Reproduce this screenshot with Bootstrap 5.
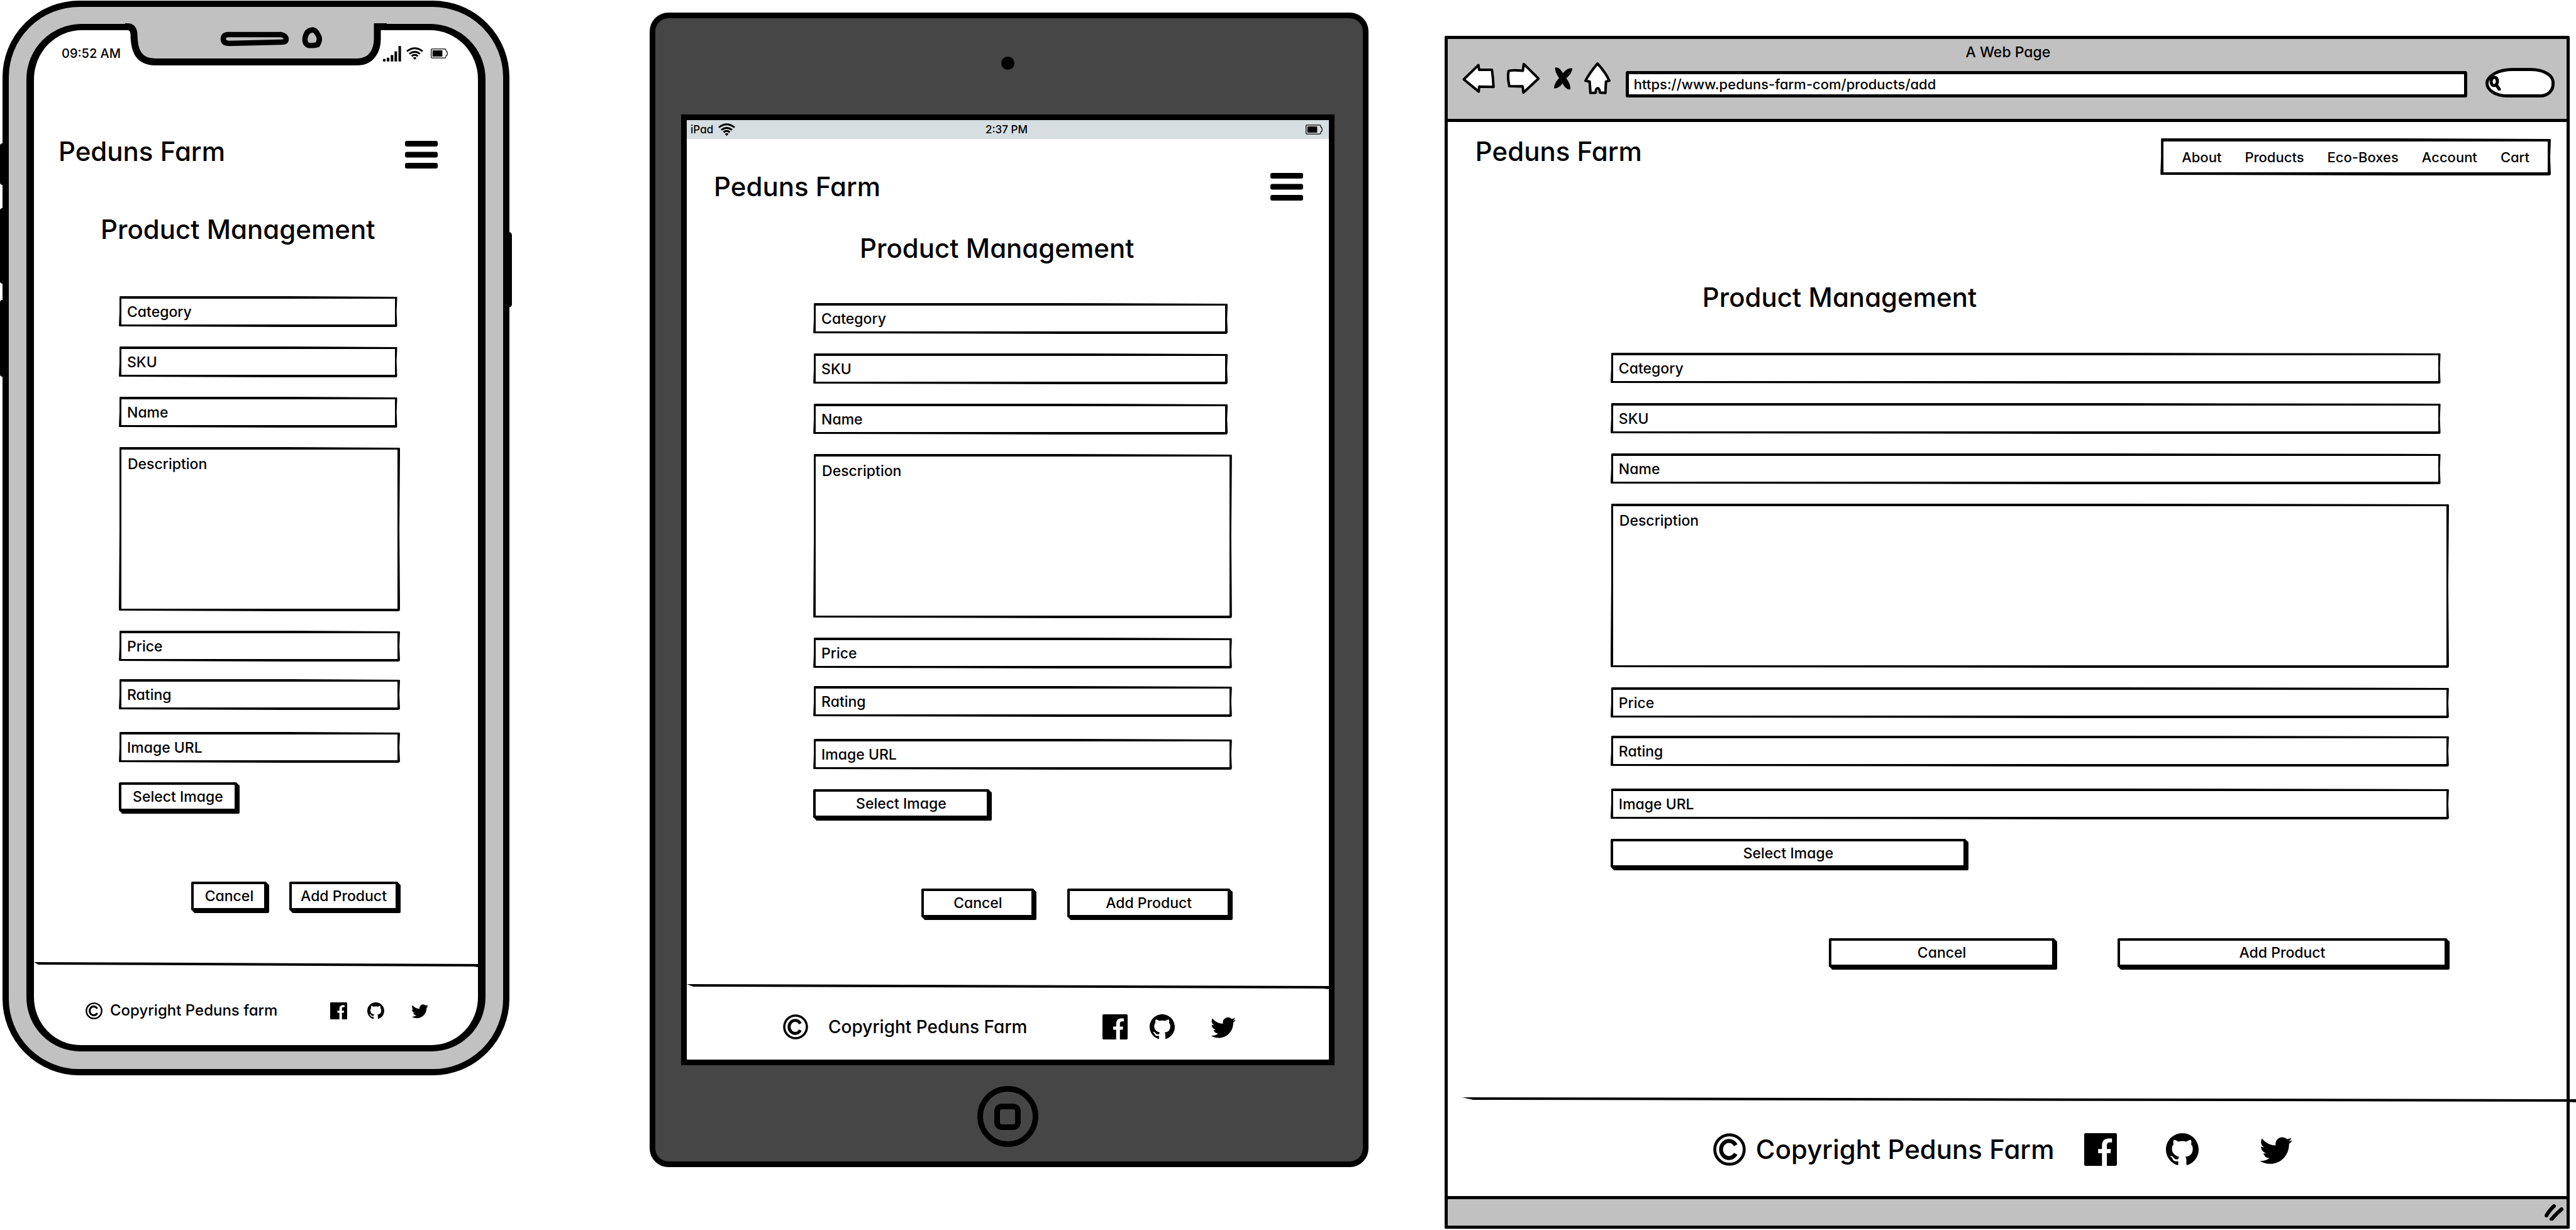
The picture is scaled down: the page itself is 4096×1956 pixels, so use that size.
<!DOCTYPE html>
<html lang="en">
<head>
<meta charset="utf-8">
<meta name="viewport" content="width=device-width, initial-scale=1">
<title>Peduns Farm - Product Management</title>
<link href="https://cdn.jsdelivr.net/npm/bootstrap@5.3.0/dist/css/bootstrap.min.css" rel="stylesheet">
<style>
  body, input, textarea, button { font-family: Inter, "Noto Sans", sans-serif; font-feature-settings: "cv11"; font-weight: 500; }
  body { background: #fff; color: #000; font-size: 23px; line-height: 28px; overflow-x: hidden; }
  svg { display: block; flex: none; fill: currentColor; }
  a { color: #000; text-decoration: none; }

  /* device columns */
  .dev-phone { width: 19.68%; margin: 1px 0 0 4px; }
  .dev-tablet { width: 27.9%; margin: 20px 0 0 223px; }
  .dev-browser { width: 43.68%; margin: 57px 0 0 121px; }

  /* phone */
  .dev-phone { border: 10px solid #000; border-radius: 122px; background: #c1c1c1; padding: 27px 28px 28px; }
  .phone-screen { border: 12px solid #000; border-width: 10px 12px; border-radius: 88px 88px 86px 86px; background: #fff; }
  .phone-notch { top: 0; left: 50%; transform: translateX(-50%); }
  .side-key { width: 9px; background: #000; }
  .key-l { left: -14px; border-radius: 4px 0 0 4px; }
  .key-r { right: -14px; border-radius: 0 5px 5px 0; }
  .key-1 { top: 217px; height: 66px; }
  .key-2 { top: 320px; height: 120px; }
  .key-3 { top: 466px; height: 122px; }
  .key-4 { top: 358px; height: 120px; }
  .phone-status { padding: 22px 48px 0 44px; line-height: 30px; font-size: 20px; }

  /* tablet */
  .dev-tablet { border: 9px solid #000; border-radius: 30px; background: #464646; padding: 0 45px 0 41px; }
  .lens-bezel { height: 153px; padding-bottom: 10px; }
  .lens { width: 21px; height: 21px; border-radius: 50%; background: #000; }
  .tablet-screen { border: 9px solid #000; background: #fff; }
  .tablet-status { height: 30px; padding: 0 10px 0 6px; background: #d7dee1; font-size: 17px; }
  .tablet-status > * { flex: 1 1 0; }
  .home-bezel { padding: 33px 0 23px; }
  .home-key { width: 97px; height: 97px; border: 9px solid #000; border-radius: 50%; background: transparent; }
  .home-mark { width: 42px; height: 42px; border: 9px solid #000; border-radius: 12px; }

  /* browser */
  .dev-browser { border: 5px solid #000; border-radius: 2px; background: #fff; }
  .chrome { background: #c1c1c1; border-bottom: 5px solid #000; padding: 7px 19px 34px 22px; }
  .chrome-title { line-height: 28px; }
  .tool-btn { padding: 0; border: 0; background: none; color: #000; }
  .url-box { height: 42px; border: 5px solid #000; border-radius: 3px; padding: 0 8px; background: #fff; color: #000; font-size: 22px; margin-left: 22px; margin-right: 29px; min-width: 0; }
  .find-box { width: 110px; height: 47px; border: 5px solid #000; border-radius: 46px 40px 24px 36px / 26px 24px 22px 24px; background: #fff; }
  .find-box input { width: 60px; border: 0; outline: 0; background: transparent; padding: 0; }
  .site-nav { border: 5px solid #000; border-radius: 3px; padding: 0 29px; gap: 37px; height: 59px; margin-top: 6px; font-size: 22px; }
  .grip-bar { background: #c1c1c1; border-top: 5px solid #000; height: 47px; padding-right: 5px; }

  /* page parts shared by the three screens */
  .big { font-size: 42px; line-height: 54px; font-weight: 500; margin: 0; }
  .site-head { padding: var(--head-t) var(--head-r) 0 var(--head-l); }
  .page-title { padding: var(--title-t) 0 0 var(--title-l); }
  .product-form { padding: var(--form-t) var(--form-r) 0 var(--form-l); }
  .sk-field { display: block; width: 100%; height: 49px; border: 4px solid #000; border-radius: 3px; padding: 0 9px; background: #fff; color: #000; margin-bottom: 31px; resize: none; line-height: 28px; }
  .sk-field, .site-nav { clip-path: polygon(1px 0, 60% 0, 100% 1px, calc(100% - 1px) 50%, 100% 100%, 60% 100%, 0 calc(100% - 1px), 1px 50%); }
  .sk-field::placeholder { color: #000; opacity: 1; }
  .sk-short { width: 99%; }
  .sk-area { height: 261px; padding: 9px 10px; }
  .sk-price { margin-bottom: 28px; }
  .sk-rating { margin-bottom: 35px; }
  .sk-btn { height: 46px; border: 4px solid #000; border-radius: 2px; background: #fff; color: #000; box-shadow: 2px 2px 0 #000, 4px 4px 0 #000; padding: 0; line-height: 28px; white-space: nowrap; }
  .w-select { width: 42%; }
  .w-cancel { width: 27%; }
  .w-add { width: 39%; }
  .form-actions { margin-top: 112px; gap: 8%; padding-right: 3px; }
  .foot-rule { height: 8px; background: #000; border: 0; opacity: 1; margin: var(--rule-t) 0 0; clip-path: polygon(0 0, 100% 3px, 100% 8px, 99% 7px, 1% 4px); }
  .site-foot { padding: var(--foot-t) var(--foot-r) var(--foot-b) var(--foot-l); }
  .site-foot .glyph { width: var(--icon); height: var(--icon); }
  .copy-text { font-size: var(--foot-size); line-height: 32px; margin-left: var(--copy-gap); white-space: nowrap; }
  .icon-a { margin-right: var(--gap-a); }
  .icon-b { margin-right: var(--gap-b); }

  .phone-screen { --head-t: 114px; --head-r: 64px; --head-l: 39px; --title-t: 70px; --title-l: 106px; --form-t: 79px; --form-r: 124px; --form-l: 135px; --rule-t: 82px; --foot-t: 53px; --foot-r: 79px; --foot-b: 39px; --foot-l: 82px; --icon: 27px; --foot-size: 24px; --copy-gap: 12px; --gap-a: 32px; --gap-b: 43px; }
  .tablet-screen { --head-t: 49px; --head-r: 41px; --head-l: 43px; --title-t: 44px; --title-l: 275px; --form-t: 60px; --form-r: 154px; --form-l: 201px; --rule-t: 106px; --foot-t: 40px; --foot-r: 148px; --foot-b: 32px; --foot-l: 153px; --icon: 40px; --foot-size: 28px; --copy-gap: 32px; --gap-a: 35px; --gap-b: 57px; }
  .dev-browser { --head-t: 20px; --head-r: 25px; --head-l: 44px; --title-t: 167px; --title-l: 405px; --form-t: 61px; --form-r: 187px; --form-l: 259px; --rule-t: 207px; --foot-t: 49px; --foot-r: 436px; --foot-b: 48px; --foot-l: 422px; --icon: 52px; --foot-size: 42px; --copy-gap: 16px; --gap-a: 78px; --gap-b: 97px; }
  .dev-browser .foot-rule { margin-left: 23px; margin-right: -15px; position: relative; }
  .dev-browser .w-select { width: 42.4%; }
  .dev-browser .w-add { width: 39.4%; }
  .dev-browser .form-actions { gap: 7.5%; }
</style>
</head>
<body>
<svg class="d-none" aria-hidden="true">
  <symbol id="i-menu" viewBox="0 0 52 44"><rect width="52" height="9" rx="3"/><rect y="17.500" width="52" height="9" rx="3"/><rect y="35" width="52" height="9" rx="3"/></symbol>
  <symbol id="i-copy" viewBox="0 0 100 100"><circle cx="50" cy="50" r="45" fill="none" stroke="currentColor" stroke-width="9"/><path d="M69 37A24 26 0 1 0 69 63" fill="none" stroke="currentColor" stroke-width="12" stroke-linecap="butt"/></symbol>
  <symbol id="i-fb" viewBox="0 0 16 16"><path fill-rule="evenodd" d="M.7 0H15.300A.7.7 0 0 1 16 .7V15.300A.7.7 0 0 1 15.300 16H11.100V9.800H12.900L13.100 7.800H11.100V6C11.100 5 11.400 4.500 12.500 4.500H13.600V2.600H12C9.800 2.600 8.700 3.900 8.700 6V7.800H6.800V9.800H8.700V16H.7A.7.7 0 0 1 0 15.300V.7A.7.7 0 0 1 .7 0Z"/></symbol>
  <symbol id="i-gh" viewBox="0 0 16 16"><path d="M8 0C3.580 0 0 3.580 0 8c0 3.540 2.290 6.530 5.470 7.590.4.070.55-.17.55-.38 0-.19-.01-.82-.01-1.490-2.010.37-2.530-.49-2.690-.94-.09-.23-.48-.94-.82-1.130-.28-.15-.68-.52-.01-.53.63-.01 1.080.58 1.230.82.72 1.210 1.870.87 2.330.66.070-.52.280-.87.510-1.070-.6-.07-3.640-.89-3.640-3.950 0-.87.310-1.590.820-2.150-.08-.2-.36-1.020.080-2.120 0 0 .67-.21 2.200.82.64-.18 1.320-.27 2-.27.68 0 1.360.09 2 .27 1.530-1.040 2.200-.82 2.200-.82.44 1.100.16 1.920.08 2.120.51.56.82 1.270.82 2.150 0 3.070-1.870 3.750-3.650 3.950.29.25.54.73.54 1.480 0 1.070-.01 1.930-.01 2.200 0 .21.15.46.55.38A8.012 8.012 0 0 0 16 8c0-4.420-3.580-8-8-8z"/></symbol>
  <symbol id="i-tw" viewBox="0 0 16 16"><path d="M5.026 15c6.038 0 9.341-5.003 9.341-9.334 0-.14 0-.282-.006-.422A6.685 6.685 0 0 0 16 3.542a6.658 6.658 0 0 1-1.889.518 3.301 3.301 0 0 0 1.447-1.817 6.533 6.533 0 0 1-2.087.793A3.286 3.286 0 0 0 7.875 6.030a9.325 9.325 0 0 1-6.767-3.429 3.289 3.289 0 0 0 1.018 4.382A3.323 3.323 0 0 1 .64 6.575v.045a3.288 3.288 0 0 0 2.632 3.218 3.203 3.203 0 0 1-.865.115 3.230 3.230 0 0 1-.614-.057 3.283 3.283 0 0 0 3.067 2.277A6.588 6.588 0 0 1 .78 13.580a6.320 6.320 0 0 1-.78-.045A9.344 9.344 0 0 0 5.026 15z"/></symbol>
  <symbol id="i-signal" viewBox="0 0 92 78"><path d="M0 65h13v13H0zM19 59h13v19H19zM39 45h13v33H39zM58 27h13v51H58zM78 0h13v78H78z"/></symbol>
  <symbol id="i-wifi" viewBox="0 0 82 60"><g fill="none" stroke="currentColor" stroke-width="9"><path d="M3 20Q41-10 79 20"/><path d="M15 32Q41 12 67 32"/><path d="M26 43Q41 31 56 43"/></g><path d="M32 51Q41 44 50 51L41 60Z"/></symbol>
  <symbol id="i-batt" viewBox="0 0 88 50"><path d="M6 2H74Q78 2 79 13L84 16Q87 25 84 34L79 37Q78 48 74 48H6Q2 48 2 44V6Q2 2 6 2Z" fill="none" stroke="currentColor" stroke-width="4"/><rect x="9" y="9" width="51" height="32"/></symbol>
</svg>

<main class="d-flex align-items-start">

  <!-- phone -->
  <section class="dev-phone flex-shrink-0 position-relative" aria-label="Phone">
    <span class="side-key key-l key-1 position-absolute"></span>
    <span class="side-key key-l key-2 position-absolute"></span>
    <span class="side-key key-l key-3 position-absolute"></span>
    <span class="side-key key-r key-4 position-absolute"></span>
    <div class="phone-screen">
      <div class="phone-status d-flex justify-content-between align-items-center">
        <span>09:52 AM</span>
        <span class="d-flex align-items-center">
          <svg class="me-2" width="29" height="25"><use href="#i-signal"/></svg>
          <svg class="me-2" width="27" height="20"><use href="#i-wifi"/></svg>
          <svg class="ms-1" width="27" height="16"><use href="#i-batt"/></svg>
        </span>
      </div>
      <header class="site-head d-flex justify-content-between align-items-end">
        <a class="big" href="#">Peduns Farm</a>
        <button class="tool-btn" type="button" aria-label="Menu"><svg width="52" height="44"><use href="#i-menu"/></svg></button>
      </header>
      <h2 class="big page-title">Product Management</h2>
      <form class="product-form">
        <input class="sk-field sk-short" type="text" placeholder="Category" aria-label="Category">
        <input class="sk-field sk-short" type="text" placeholder="SKU" aria-label="SKU">
        <input class="sk-field sk-short" type="text" placeholder="Name" aria-label="Name">
        <textarea class="sk-field sk-area" placeholder="Description" aria-label="Description"></textarea>
        <input class="sk-field sk-price" type="text" placeholder="Price" aria-label="Price">
        <input class="sk-field sk-rating" type="text" placeholder="Rating" aria-label="Rating">
        <input class="sk-field" type="text" placeholder="Image URL" aria-label="Image URL">
        <button class="sk-btn w-select d-block" type="button">Select Image</button>
        <div class="form-actions d-flex justify-content-end">
          <button class="sk-btn w-cancel" type="button">Cancel</button>
          <button class="sk-btn w-add" type="submit">Add Product</button>
        </div>
      </form>
      <hr class="foot-rule">
      <footer class="site-foot d-flex align-items-center">
        <svg class="glyph"><use href="#i-copy"/></svg>
        <span class="copy-text">Copyright Peduns farm</span>
        <a class="icon-a ms-auto" href="#" aria-label="Facebook"><svg class="glyph"><use href="#i-fb"/></svg></a>
        <a class="icon-b" href="#" aria-label="GitHub"><svg class="glyph"><use href="#i-gh"/></svg></a>
        <a href="#" aria-label="Twitter"><svg class="glyph"><use href="#i-tw"/></svg></a>
      </footer>
    </div>
    <svg class="phone-notch position-absolute" width="416" height="96" viewBox="200 11 416 96" aria-hidden="true">
      <path fill="#c1c1c1" d="M210 35H604V62C601 80 594 98 572 98H246C222 98 214 80 214 54Z"/>
      <path fill="none" stroke="#000" stroke-width="11" d="M200 42.500H203Q213 42 214 54C214 82 222 98 248 98.500H570C592 98 601 80 601 62V42.500H616"/>
      <path fill="none" stroke="#000" stroke-width="8.500" d="M364 55H448Q456 57 456 62Q456 67 448 67L366 69Q356 69 356 62Q356 55 364 55Z"/>
      <path fill="none" stroke="#000" stroke-width="8.500" d="M496 48Q502 46 507 56Q511 62 506 71Q500 73 491 72Q485 69 486 61Q488 49 496 48Z"/>
    </svg>
  </section>

  <!-- tablet -->
  <section class="dev-tablet flex-shrink-0" aria-label="Tablet">
    <div class="lens-bezel d-flex justify-content-center align-items-center"><span class="lens"></span></div>
    <div class="tablet-screen">
      <div class="tablet-status d-flex align-items-center">
        <span class="d-flex align-items-center">iPad<svg class="ms-2" width="27" height="20"><use href="#i-wifi"/></svg></span>
        <span class="text-center">2:37 PM</span>
        <span class="d-flex justify-content-end"><svg width="27" height="16"><use href="#i-batt"/></svg></span>
      </div>
      <header class="site-head d-flex justify-content-between align-items-center">
        <a class="big" href="#">Peduns Farm</a>
        <button class="tool-btn" type="button" aria-label="Menu"><svg width="52" height="44"><use href="#i-menu"/></svg></button>
      </header>
      <h2 class="big page-title">Product Management</h2>
      <form class="product-form">
        <input class="sk-field sk-short" type="text" placeholder="Category" aria-label="Category">
        <input class="sk-field sk-short" type="text" placeholder="SKU" aria-label="SKU">
        <input class="sk-field sk-short" type="text" placeholder="Name" aria-label="Name">
        <textarea class="sk-field sk-area" placeholder="Description" aria-label="Description"></textarea>
        <input class="sk-field sk-price" type="text" placeholder="Price" aria-label="Price">
        <input class="sk-field sk-rating" type="text" placeholder="Rating" aria-label="Rating">
        <input class="sk-field" type="text" placeholder="Image URL" aria-label="Image URL">
        <button class="sk-btn w-select d-block" type="button">Select Image</button>
        <div class="form-actions d-flex justify-content-end">
          <button class="sk-btn w-cancel" type="button">Cancel</button>
          <button class="sk-btn w-add" type="submit">Add Product</button>
        </div>
      </form>
      <hr class="foot-rule">
      <footer class="site-foot d-flex align-items-center">
        <svg class="glyph"><use href="#i-copy"/></svg>
        <span class="copy-text">Copyright Peduns Farm</span>
        <a class="icon-a ms-auto" href="#" aria-label="Facebook"><svg class="glyph"><use href="#i-fb"/></svg></a>
        <a class="icon-b" href="#" aria-label="GitHub"><svg class="glyph"><use href="#i-gh"/></svg></a>
        <a href="#" aria-label="Twitter"><svg class="glyph"><use href="#i-tw"/></svg></a>
      </footer>
    </div>
    <div class="home-bezel d-flex justify-content-center">
      <button class="home-key d-flex justify-content-center align-items-center p-0" type="button" aria-label="Home"><span class="home-mark"></span></button>
    </div>
  </section>

  <!-- browser window -->
  <section class="dev-browser flex-shrink-0" aria-label="Browser">
    <div class="chrome">
      <div class="chrome-title text-center">A Web Page</div>
      <div class="d-flex align-items-end">
        <div class="d-flex align-items-center pb-1">
          <button class="tool-btn" type="button" aria-label="Back"><svg width="54" height="51" viewBox="25 45 172 165"><path d="M35 133L110 60L114 84L180 84Q186 130 188 172L114 170L112 196Z" fill="#fff" stroke="#000" stroke-width="13" stroke-linejoin="round"/></svg></button>
          <button class="tool-btn ms-3" type="button" aria-label="Forward"><svg width="56" height="54" viewBox="247 45 180 172"><path d="M262 96Q275 88 335 94L340 60L415 134L338 206L334 174L266 173Q256 130 262 96Z" fill="#fff" stroke="#000" stroke-width="13" stroke-linejoin="round"/></svg></button>
          <button class="tool-btn ms-3 ps-1" type="button" aria-label="Stop"><svg width="31" height="39" viewBox="495 60 100 125"><path d="M504 68Q526 60 547 103Q586 150 582 180Q555 182 538 140Q500 92 504 68Z"/><path d="M592 72Q594 95 556 127Q530 176 498 174Q500 142 530 116Q562 64 592 72Z"/></svg></button>
          <button class="tool-btn ms-3" type="button" aria-label="Home page"><svg width="46" height="54" viewBox="640 42 147 172"><path d="M714 55Q755 100 774 142L757 146L754 204L726 202Q724 180 715 180Q706 180 704 203L678 204L674 146L653 142Q675 100 714 55Z" fill="#fff" stroke="#000" stroke-width="13" stroke-linejoin="round"/></svg></button>
        </div>
        <input class="url-box flex-grow-1" type="text" value="https://www.peduns-farm-com/products/add" aria-label="Address">
        <div class="find-box d-flex align-items-center">
          <svg class="me-2" width="20" height="24" viewBox="0 0 20 24"><path d="M9 3Q14 3 14 10Q13 16 9 16Q4 16 4 9Q5 3 9 3ZM13 16L17 22" fill="none" stroke="#000" stroke-width="5" stroke-linecap="round"/></svg>
          <input type="search" aria-label="Search">
        </div>
      </div>
    </div>
    <header class="site-head d-flex justify-content-between align-items-start">
      <a class="big" href="#">Peduns Farm</a>
      <nav class="site-nav d-flex align-items-center">
        <a href="#">About</a><a href="#">Products</a><a href="#">Eco-Boxes</a><a href="#">Account</a><a href="#">Cart</a>
      </nav>
    </header>
    <h2 class="big page-title">Product Management</h2>
    <form class="product-form">
      <input class="sk-field sk-short" type="text" placeholder="Category" aria-label="Category">
      <input class="sk-field sk-short" type="text" placeholder="SKU" aria-label="SKU">
      <input class="sk-field sk-short" type="text" placeholder="Name" aria-label="Name">
      <textarea class="sk-field sk-area" placeholder="Description" aria-label="Description"></textarea>
      <input class="sk-field sk-price" type="text" placeholder="Price" aria-label="Price">
      <input class="sk-field sk-rating" type="text" placeholder="Rating" aria-label="Rating">
      <input class="sk-field" type="text" placeholder="Image URL" aria-label="Image URL">
      <button class="sk-btn w-select d-block" type="button">Select Image</button>
      <div class="form-actions d-flex justify-content-end">
        <button class="sk-btn w-cancel" type="button">Cancel</button>
        <button class="sk-btn w-add" type="submit">Add Product</button>
      </div>
    </form>
    <hr class="foot-rule">
    <footer class="site-foot d-flex align-items-center">
      <svg class="glyph"><use href="#i-copy"/></svg>
      <span class="copy-text">Copyright Peduns Farm</span>
      <a class="icon-a ms-auto" href="#" aria-label="Facebook"><svg class="glyph"><use href="#i-fb"/></svg></a>
      <a class="icon-b" href="#" aria-label="GitHub"><svg class="glyph"><use href="#i-gh"/></svg></a>
      <a href="#" aria-label="Twitter"><svg class="glyph"><use href="#i-tw"/></svg></a>
    </footer>
    <div class="grip-bar d-flex justify-content-end align-items-center">
      <svg width="30" height="26" viewBox="0 0 30 26"><path d="M15 3Q9 8 3 18M27 8Q20 14 11 24" fill="none" stroke="#000" stroke-width="6" stroke-linecap="round"/></svg>
    </div>
  </section>
</main>
<script src="https://cdn.jsdelivr.net/npm/bootstrap@5.3.0/dist/js/bootstrap.bundle.min.js"></script>
</body>
</html>
